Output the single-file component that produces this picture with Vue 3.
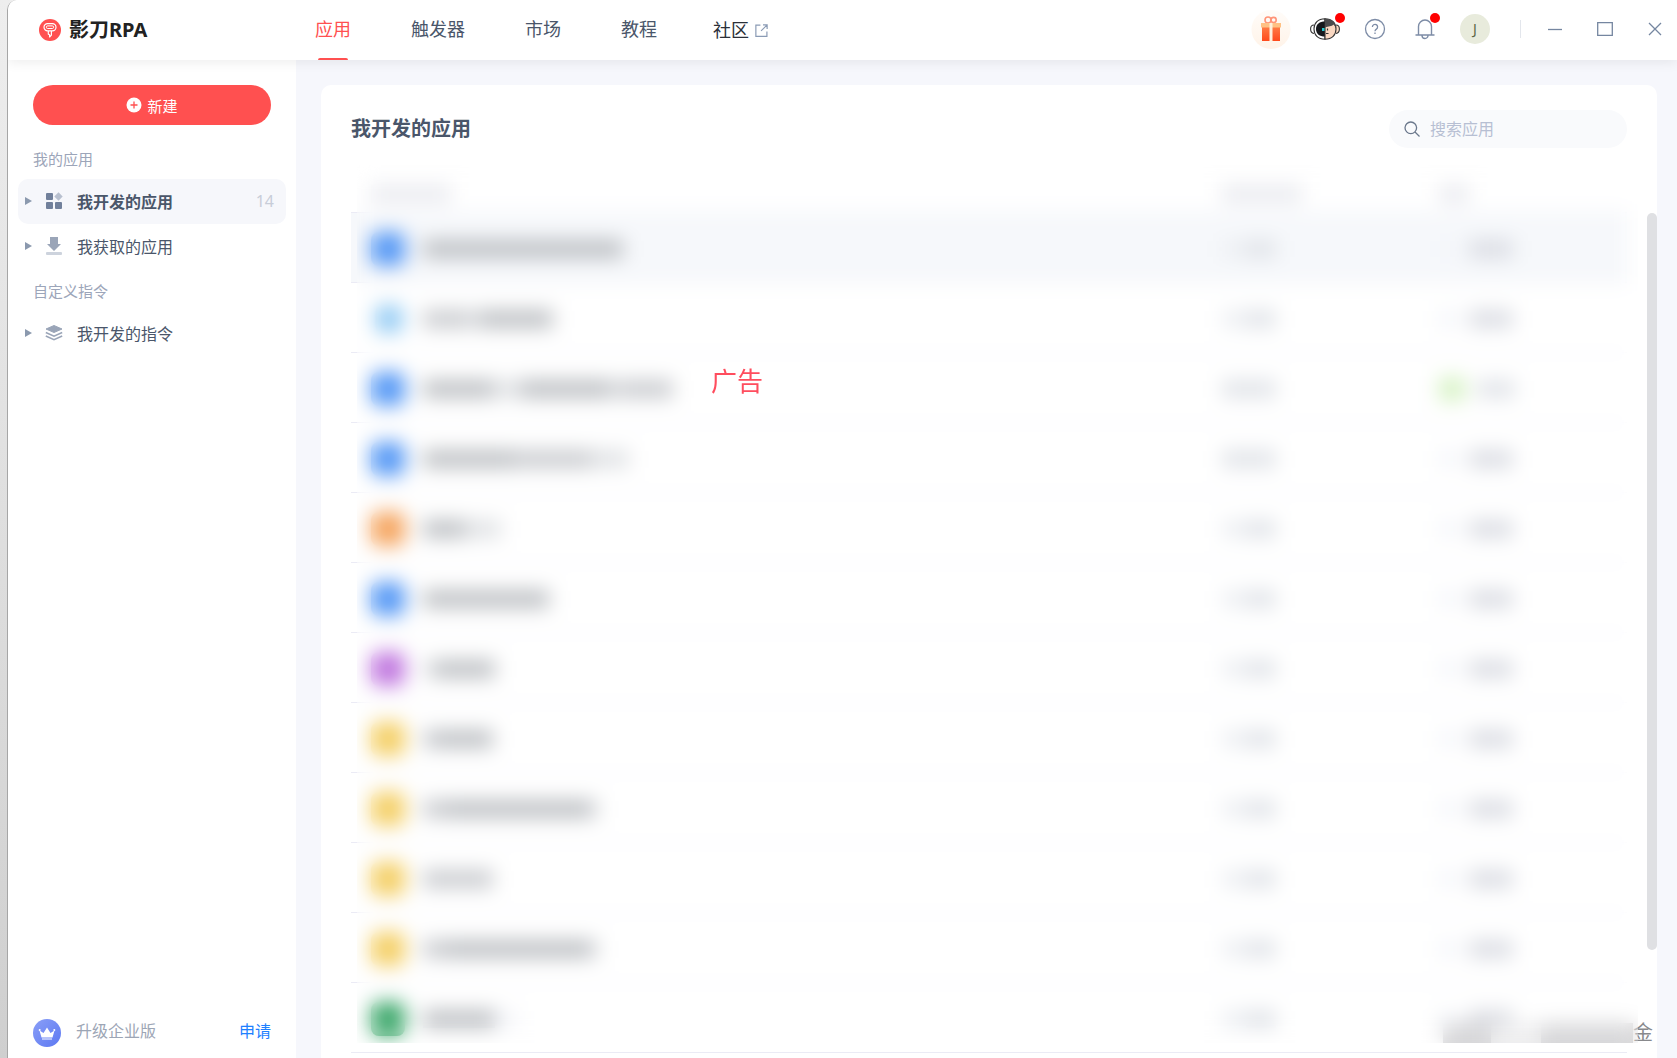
<script setup>
import { ref } from 'vue'

const keyword = ref('')

const navs = ['应用', '触发器', '市场', '教程']

const groups = [
  {
    title: '我的应用',
    items: [
      { name: '我开发的应用', icon: 'apps', count: 14, active: true },
      { name: '我获取的应用', icon: 'download' }
    ]
  },
  {
    title: '自定义指令',
    items: [{ name: '我开发的指令', icon: 'layers' }]
  }
]

// name: [width, tone] pieces of each masked app name
const rows = [
  { color: 'blue', name: [[200, 'dark']], hover: true },
  { color: 'sky', name: [[46, 'mid'], [10, 'light'], [74, 'dark']] },
  { color: 'blue', name: [[70, 'dark'], [28, 'light'], [90, 'dark'], [8, 'light'], [54, 'mid']], full: true, running: true },
  { color: 'blue', name: [[90, 'dark'], [12, 'mid'], [66, 'mid'], [38, 'light']], full: true },
  { color: 'orange', name: [[42, 'dark'], [36, 'light']] },
  { color: 'blue', name: [[126, 'dark']] },
  { color: 'purple', name: [[12, 'light'], [60, 'dark']] },
  { color: 'yellow', name: [[14, 'mid'], [56, 'dark']] },
  { color: 'yellow', name: [[24, 'mid'], [144, 'dark'], [8, 'light']] },
  { color: 'yellow', name: [[70, 'mid']] },
  { color: 'yellow', name: [[24, 'mid'], [144, 'dark'], [8, 'light']] },
  { color: 'green', name: [[72, 'dark'], [24, 'faint']] }
]
</script>

<template>
  <div class="desktop">
    <div class="window">
      <header class="topbar">
        <div class="brand">
          <svg class="logo" viewBox="0 0 22 22">
            <circle cx="11" cy="11" r="11" fill="#ff5050" />
            <g fill="none" stroke="#fff" stroke-linejoin="round">
              <rect x="5" y="4.600" width="12" height="7.200" rx="3.600" stroke-width="1.200" />
              <rect x="7.400" y="6.900" width="7.200" height="2.600" rx="1.200" />
              <path d="M9.300 12v3.200l1.300.5v2.300l1.800-1.800V12" stroke-width="1.200" />
            </g>
          </svg>
          <strong>影刀RPA</strong>
        </div>
        <nav class="nav">
          <a v-for="(item, i) in navs" :key="item" href="#" :class="{ active: i === 0 }">{{ item }}</a>
          <a class="external" href="#">
            社区
            <svg viewBox="0 0 12 12" fill="none" stroke="#8a9bb5" stroke-width="1.100">
              <path d="M5 1H.8v10.400H11V7M7.400.8h3.800v3.800M11 1 5.600 6.400" />
            </svg>
          </a>
        </nav>
        <div class="tools">
          <button class="tool gift" aria-label="福利">
            <svg viewBox="0 0 40 40">
              <defs>
                <linearGradient id="giftBg" x1="0" y1="0" x2="0" y2="1">
                  <stop offset="0" stop-color="#fffcf9" />
                  <stop offset="1" stop-color="#fff3e8" />
                </linearGradient>
                <linearGradient id="giftBox" x1="0" y1="0" x2="0" y2="1">
                  <stop offset="0" stop-color="#ff7b45" />
                  <stop offset="1" stop-color="#ff4a1c" />
                </linearGradient>
              </defs>
              <circle cx="20" cy="20.500" r="19.500" fill="url(#giftBg)" />
              <g fill="none" stroke="#ff9478" stroke-width="1.600">
                <circle cx="17" cy="11" r="3" />
                <circle cx="22.600" cy="11" r="2.600" />
              </g>
              <path d="M11 18h18v14H11z" fill="url(#giftBox)" />
              <path d="M10 14h20v4.500H10z" fill="#ffc184" />
              <path d="M18.500 14h3v18h-3z" fill="#fff0dc" />
            </svg>
          </button>
          <button class="tool" aria-label="客服">
            <svg class="face" viewBox="0 0 30 22">
              <path d="M4 7C1 7 .6 9 .6 11S1 15 4 15.500" fill="#fff" stroke="#333" stroke-width="1.100" />
              <path d="M26 7c3 0 3.400 2 3.400 4s-.4 4-3.400 4.500" fill="#fad8c2" stroke="#333" stroke-width="1.100" />
              <path d="M15 .7C8 .7 4 5 4 11s4 10.300 11 10.300z" fill="#fff" stroke="#333" stroke-width="1.100" />
              <path d="M15 3.500C9.500 3.500 6 6 6 11s3.500 7.500 9 7.500z" fill="#16181c" />
              <path d="M15 .7c7 0 11 4.300 11 10.300s-4 10.300-11 10.300z" fill="#fad8c2" stroke="#333" stroke-width="1.100" />
              <path d="M15 .7c6 0 10.500 3 11 9l-2.500-3.200c-2 2.200-5 1.500-8.500 3z" fill="#4a4a4c" />
              <rect x="12" y="10" width="2.500" height="3" fill="#25c9d0" />
              <path d="M17.500 10.500v2M16 15.500h2.500" stroke="#333" stroke-width="1.200" />
            </svg>
            <i class="dot" />
          </button>
          <button class="tool" aria-label="帮助">
            <svg viewBox="0 0 22 22" fill="none" stroke="#7d8ca6" stroke-width="1.300">
              <circle cx="11" cy="11" r="9.500" />
              <path d="M8.400 9a2.600 2.600 0 1 1 4 2.100c-1 .7-1.400 1.100-1.400 2.100" />
              <path d="M11 14.500v1.500" />
            </svg>
          </button>
          <button class="tool bell" aria-label="消息">
            <svg viewBox="0 0 22 22" fill="none" stroke="#7d8ca6" stroke-width="1.400">
              <path d="M4.500 17V8.500a6.500 6.500 0 0 1 13 0V17M1.500 17h19M8 17.500a3 3 0 0 0 6 0" />
            </svg>
            <i class="dot" />
          </button>
          <button class="tool"><span class="avatar">J</span></button>
          <i class="divider" />
          <button class="win" aria-label="最小化">
            <svg viewBox="0 0 16 16"><path d="M1 8.500h14" /></svg>
          </button>
          <button class="win" aria-label="最大化">
            <svg viewBox="0 0 16 16"><path d="M.7 1.700h14.600v12.600H.7z" /></svg>
          </button>
          <button class="win" aria-label="关闭">
            <svg viewBox="0 0 16 16"><path d="M2 2l12 12M14 2 2 14" /></svg>
          </button>
        </div>
      </header>

      <div class="body">
        <aside class="sidebar">
          <button class="create">
            <svg viewBox="0 0 16 16">
              <circle cx="8" cy="8" r="7.500" fill="#fff" />
              <path d="M8 4.500v7M4.500 8h7" stroke="#ff5050" stroke-width="1.300" />
            </svg>
            新建
          </button>
          <section v-for="group in groups" :key="group.title" class="group">
            <h3>{{ group.title }}</h3>
            <a v-for="item in group.items" :key="item.name" href="#" class="item" :class="{ active: item.active }">
              <i class="arrow" />
              <svg v-if="item.icon === 'apps'" viewBox="0 0 18 18" fill="#71809b">
                <rect x="1" y="1" width="7" height="7" rx="1" />
                <rect x="1" y="10" width="7" height="7" rx="1" />
                <rect x="10" y="10" width="7" height="7" rx="1" />
                <path d="M13.500.3 17.700 4.500l-4.200 4.200-4.200-4.200z" fill="#b8c0cf" />
              </svg>
              <svg v-else-if="item.icon === 'download'" viewBox="0 0 18 18" fill="#9aa5b8">
                <path d="M5 0h8v7h3L9 14 2 7h3z" />
                <rect x="1" y="15" width="16" height="3" rx="1" fill="#cdd3dd" />
              </svg>
              <svg v-else viewBox="0 0 18 18" fill="none" stroke="#9aa5b8" stroke-width="1.600">
                <path d="M9 1.500 17 5 9 8.500 1 5z" fill="#9aa5b8" stroke-width="1" />
                <path d="M.8 8.500 9 12.200l8.200-3.700M.8 12 9 15.700l8.200-3.700" />
              </svg>
              <span>{{ item.name }}</span>
              <em v-if="item.count">{{ item.count }}</em>
            </a>
          </section>
          <div class="upgrade">
            <svg viewBox="0 0 28 28">
              <defs>
                <linearGradient id="crown" x1="0" y1="0" x2="1" y2="1">
                  <stop offset="0" stop-color="#8a9ff7" />
                  <stop offset="1" stop-color="#5c78f2" />
                </linearGradient>
              </defs>
              <circle cx="14" cy="14" r="14" fill="url(#crown)" />
              <path d="M6.500 11.500l4 2.500L14 8.500l3.500 5.500 4-2.500-2 7H8.500z" fill="#fff" />
              <circle cx="6.700" cy="11" r="1" fill="#fff" />
              <circle cx="21.300" cy="11" r="1" fill="#fff" />
              <path d="M9 20h10" stroke="#fff" stroke-width="1" />
            </svg>
            <span>升级企业版</span>
            <a href="#">申请</a>
          </div>
        </aside>

        <main class="card">
          <div class="card-head">
            <h1>我开发的应用</h1>
            <label class="search">
              <svg viewBox="0 0 16 16" fill="none" stroke="#6b788c" stroke-width="1.300">
                <circle cx="6.800" cy="6.800" r="5.800" />
                <path d="M11 11l4.500 4.500" />
              </svg>
              <input v-model="keyword" type="text" placeholder="搜索应用" aria-label="搜索应用">
            </label>
          </div>

          <table class="apps">
            <thead>
              <tr>
                <th class="col-name"><i class="bar head long" /></th>
                <th class="col-time"><i class="bar head long" /></th>
                <th><i class="bar head short" /></th>
              </tr>
            </thead>
            <tbody>
              <tr v-for="(row, i) in rows" :key="i" :class="{ hover: row.hover }">
                <td>
                  <div class="cell">
                    <i class="app-icon" :class="row.color" />
                    <i
                      v-for="(part, n) in row.name"
                      :key="n"
                      class="bar"
                      :class="part[1]"
                      :style="{ width: part[0] + 'px' }"
                    />
                  </div>
                </td>
                <td>
                  <div class="cell">
                    <i class="bar time-a" :class="{ full: row.full }" />
                    <i class="bar time-b" />
                  </div>
                </td>
                <td>
                  <div class="cell">
                    <i class="bar state" :class="{ running: row.running }" />
                    <i class="bar state-text" :class="{ running: row.running }" />
                  </div>
                </td>
              </tr>
            </tbody>
          </table>

          <div class="watermark">
            <i class="mark wide" />
            <i class="mark pale" />
            <i class="mark wider" />
            <span>金</span>
          </div>
          <div class="mosaic" />
          <div class="scrollbar" />
          <span class="ad">广告</span>
        </main>
      </div>
    </div>
  </div>
</template>

<style>
body {
  margin: 0;
}
</style>

<style scoped>
* {
  box-sizing: border-box;
}

.desktop {
  height: 100vh;
  padding-left: 7px;
  background: linear-gradient(#eeeeee, #cfcfcf);
  font-family: "Noto Sans", "Noto Sans CJK SC", sans-serif;
  color: #4a566a;
  overflow: hidden;
}

.window {
  display: flex;
  flex-direction: column;
  height: 100%;
  border-left: 1px solid #a6a6a6;
  border-top-left-radius: 10px;
  background: #fff;
  overflow: hidden;
}

a {
  color: inherit;
  text-decoration: none;
}

button {
  border: 0;
  padding: 0;
  background: none;
  font: inherit;
  cursor: pointer;
}

svg {
  display: block;
  flex: none;
}

/* top bar */
.topbar {
  position: relative;
  z-index: 1;
  display: flex;
  align-items: center;
  flex: 0 0 60px;
  background: #fff;
  box-shadow: 0 2px 12px rgba(0, 0, 0, 0.08);
}

.brand {
  display: flex;
  align-items: center;
  gap: 8px;
  flex: 0 0 277px;
  padding-left: 31px;
  font-size: 20px;
  line-height: 28px;
  color: #222;
}

.logo {
  width: 22px;
  height: 22px;
}

.nav {
  display: flex;
  height: 100%;
  font-size: 18px;
  line-height: 58px;
}

.nav a {
  position: relative;
  padding: 0 30px;
}

.nav a.active {
  color: #ff5050;
}

.nav a.active::after {
  content: "";
  position: absolute;
  left: 50%;
  bottom: 0;
  width: 30px;
  height: 2px;
  margin-left: -15px;
  border-radius: 2px 2px 0 0;
  background: #ff5050;
}

.nav .external {
  display: flex;
  align-items: center;
  gap: 6px;
  padding: 0 26px;
  color: #2b3038;
}

.external svg {
  width: 13px;
  height: 13px;
}

.tools {
  display: flex;
  align-items: center;
  gap: 10px;
  margin-left: auto;
  padding: 0 2px 2px 0;
}

.tool {
  position: relative;
  display: flex;
  align-items: center;
  justify-content: center;
  width: 40px;
  height: 40px;
}

.tool svg {
  width: 22px;
  height: 22px;
}

.gift {
  margin-right: 4px;
}

.tool.gift svg {
  width: 40px;
  height: 40px;
}

.tool .face {
  width: 30px;
}

.dot {
  position: absolute;
  top: 4px;
  right: 0;
  width: 10px;
  height: 10px;
  border-radius: 50%;
  background: #ff0000;
}

.bell .dot {
  right: 5px;
}

.avatar {
  width: 30px;
  border-radius: 50%;
  background: #e8ebdc;
  color: #5c6647;
  font-size: 14px;
  line-height: 30px;
}

.divider {
  width: 1px;
  height: 18px;
  margin: 0 4px 0 15px;
  background: #e3e6ec;
}

.win {
  display: flex;
  justify-content: center;
  width: 40px;
  padding: 12px 0;
}

.win svg {
  width: 16px;
  height: 16px;
  fill: none;
  stroke: #7586a0;
  stroke-width: 1.3;
}

/* sidebar */
.body {
  display: flex;
  flex: 1;
  min-height: 0;
  background: #f6f7fc;
}

.sidebar {
  display: flex;
  flex-direction: column;
  flex: 0 0 288px;
  padding: 25px 10px 11px;
  background: #fff;
}

.create {
  display: flex;
  align-items: center;
  justify-content: center;
  gap: 5px;
  height: 40px;
  margin: 0 15px 14px;
  border-radius: 20px;
  background: #ff5050;
  color: #fff;
  font-size: 15px;
}

.create svg {
  width: 16px;
  height: 16px;
}

.group + .group {
  margin-top: 2px;
}

.group h3 {
  margin: 0;
  padding: 0 15px;
  font-size: 15px;
  font-weight: 400;
  line-height: 40px;
  color: #9ca5b9;
}

.item {
  display: flex;
  align-items: center;
  height: 45px;
  padding: 0 12px 2px 7px;
  border-radius: 10px;
  font-size: 16px;
}

.item.active {
  background: #f6f7fb;
  font-weight: 700;
}

.arrow {
  border: 4px solid transparent;
  border-left: 7px solid #8b99ae;
  border-right: 0;
}

.item svg {
  width: 18px;
  height: 18px;
  margin: 0 14px 0 13px;
}

.item em {
  margin-left: auto;
  font-style: normal;
  font-weight: 400;
  font-size: 16px;
  color: #c8cdd8;
}

.upgrade {
  display: flex;
  align-items: center;
  gap: 15px;
  margin-top: auto;
  padding: 0 15px;
  font-size: 16px;
  line-height: 24px;
  color: #9ca5b5;
}

.upgrade svg {
  width: 28px;
  height: 28px;
}

.upgrade span,
.upgrade a {
  padding-bottom: 4px;
}

.upgrade a {
  margin-left: auto;
  color: #1e80ff;
}

/* card */
.card {
  position: relative;
  flex: 1;
  min-width: 0;
  margin: 25px 20px 0 25px;
  padding: 25px 30px 0;
  border-radius: 10px 10px 0 0;
  background: #fff;
  overflow: hidden;
}

.card-head {
  display: flex;
  align-items: center;
  justify-content: space-between;
  margin-bottom: 25px;
}

h1 {
  margin: 0;
  font-size: 20px;
  line-height: 30px;
}

.search {
  display: flex;
  align-items: center;
  gap: 10px;
  width: 238px;
  height: 38px;
  padding: 0 15px;
  border-radius: 20px;
  background: #f9fafc;
}

.search svg {
  width: 16px;
  height: 16px;
}

.search input {
  flex: 1;
  min-width: 0;
  border: 0;
  padding: 0;
  background: none;
  outline: none;
  font: inherit;
  font-size: 16px;
}

.search input::placeholder {
  color: #b7bfd3;
}

.apps {
  width: 100%;
  table-layout: fixed;
  border-spacing: 0;
}

.apps th,
.apps td {
  height: 70px;
  padding: 2px 0 0 16px;
  border-bottom: 1px solid #ebebf5;
  text-align: left;
}

.apps th {
  height: 40px;
}

.apps .col-name {
  width: 67%;
  padding-left: 20px;
}

.apps .col-time {
  width: 17%;
}

.apps .hover td {
  background: #f6f8fb;
}

.cell {
  display: flex;
  align-items: center;
}

.app-icon {
  width: 34px;
  height: 34px;
  margin: 0 18px 0 4px;
  border-radius: 8px;
}

.blue { background: #5598f5; }
.sky { width: 28px; height: 28px; margin: 0 20px 0 8px; background: #93cbf4; }
.orange { background: #f5a45e; }
.purple { background: #c077df; }
.yellow { background: #f4cf66; }
.green { background: #3ba76a; }

.bar {
  display: block;
  height: 18px;
}

.dark { background: #bbbec2; }
.mid { background: #c8cace; }
.light { background: #dfe1e4; }
.faint { background: #f5f6fa; }

.head { background: #eaebf0; }
.head.long { width: 80px; }
.head.short { width: 30px; }

.time-a { width: 24px; background: #edeff3; }
.time-a.full { background: #e0e3e8; }
.time-b { width: 30px; background: #e0e3e8; }

.state { width: 18px; margin-right: 12px; background: #f3f5fa; }
.state-text { width: 44px; background: #dadce3; }

.state.running { width: 26px; height: 24px; background: #d6f2c4; }
.state-text.running { width: 38px; background: #e0e3e8; }

.watermark {
  position: absolute;
  right: 4px;
  bottom: 10px;
  display: flex;
  align-items: center;
  font-size: 20px;
  line-height: 30px;
  color: #88898c;
}

.mark {
  height: 20px;
  background: #d8d8da;
}

.mark.wide { width: 48px; }
.mark.pale { width: 50px; background: #efeff0; }
.mark.wider { width: 92px; }

.mosaic {
  position: absolute;
  top: 80px;
  right: 19px;
  bottom: 15px;
  left: 36px;
  backdrop-filter: blur(10px);
}

.scrollbar {
  position: absolute;
  top: 128px;
  right: 0;
  bottom: 108px;
  width: 10px;
  border-radius: 5px;
  background: #dfe0e3;
}

.ad {
  position: absolute;
  top: 276px;
  left: 390px;
  font-size: 26px;
  line-height: 40px;
  color: #ff4d5e;
}
</style>
